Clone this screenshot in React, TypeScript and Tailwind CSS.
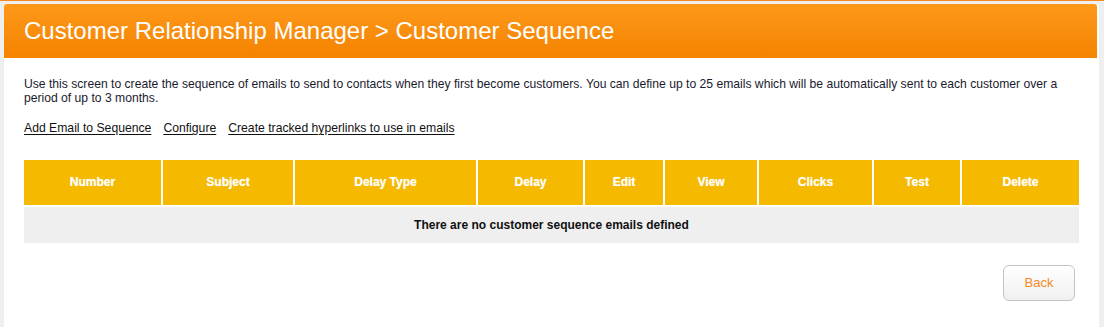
import React from 'react';

const columns = [
  { label: 'Number', width: 'w-[138px]' },
  { label: 'Subject', width: 'w-[132px]' },
  { label: 'Delay Type', width: 'w-[183px]' },
  { label: 'Delay', width: 'w-[107px]' },
  { label: 'Edit', width: 'w-[80px]' },
  { label: 'View', width: 'w-[94px]' },
  { label: 'Clicks', width: 'w-[115px]' },
  { label: 'Test', width: 'w-[88px]' },
  { label: 'Delete', width: '' },
];

const App: React.FC = () => {
  return (
    <div className="min-h-[327px] bg-[#efefef] border-t border-[#f58a1f] pt-[3px] pl-[4px] pr-[5px] font-['Liberation_Sans',Arial,sans-serif]">
      <div className="bg-white min-h-[323px] pr-[2px]">
        <div className="h-[54px] rounded-t-[3px] bg-gradient-to-b from-[#fd9818] to-[#f58300] flex items-center pl-[20px]">
          <h1 className="text-white text-[24px] leading-none">
            Customer Relationship Manager &gt; Customer Sequence
          </h1>
        </div>

        <div className="px-[20px] pt-[19px]">
          <p className="text-[12.15px] leading-[14px] text-[#1a1a2e]">
            Use this screen to create the sequence of emails to send to contacts when they first become customers. You can define up to 25 emails which will be automatically sent to each customer over a period of up to 3 months.
          </p>

          <div className="mt-[16px] flex gap-[12px] text-[12.2px] leading-[14px] text-[#111]">
            <a className="underline underline-offset-2">Add Email to Sequence</a>
            <a className="underline underline-offset-2">Configure</a>
            <a className="underline underline-offset-2">Create tracked hyperlinks to use in emails</a>
          </div>

          <table className="mt-[25px] w-[1055px] border-collapse text-[12px]">
            <thead>
              <tr className="bg-[#f5b900] h-[46px]">
                {columns.map((c, i) => (
                  <th
                    key={c.label}
                    className={`${c.width} font-bold text-white text-center pb-[2px] [text-shadow:0_0_1px_rgba(255,255,255,0.6)] ${
                      i < columns.length - 1 ? 'border-r-2 border-white' : ''
                    }`}
                  >
                    {c.label}
                  </th>
                ))}
              </tr>
            </thead>
            <tbody>
              <tr className="border-t-2 border-white">
                <td colSpan={9} className="bg-[#efefef] h-[37px] text-center font-bold text-[#111]">
                  There are no customer sequence emails defined
                </td>
              </tr>
            </tbody>
          </table>

          <div className="flex justify-end mt-[22px] pr-[2px] w-[1055px]">
            <button className="w-[72px] h-[36px] rounded-[6px] border border-[#c4c4c4] bg-gradient-to-b from-white to-[#f0f0f0] text-[#f58a1f] text-[13px] mr-[2px]">
              Back
            </button>
          </div>
        </div>
      </div>
    </div>
  );
};

export default App;
